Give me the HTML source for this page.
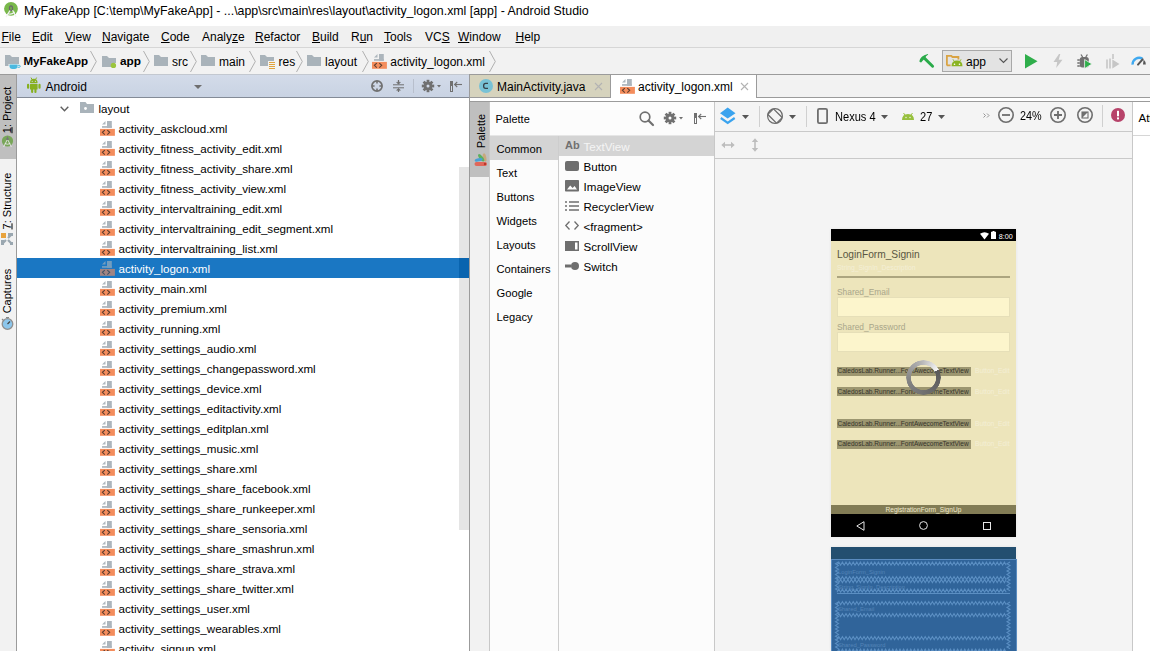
<!DOCTYPE html>
<html><head><meta charset="utf-8">
<style>
*{margin:0;padding:0;box-sizing:border-box}
html,body{width:1150px;height:651px;overflow:hidden;background:#fff;font-family:"Liberation Sans",sans-serif;font-size:12px;color:#000}
.a{position:absolute}
.t{position:absolute;white-space:pre;line-height:1}
svg{position:absolute;overflow:visible}
.u{text-decoration:underline;text-underline-offset:1px;text-decoration-thickness:1px}
</style></head><body>
<div class="a" style="left:0px;top:0px;width:1150px;height:25px;background:#fff;"></div>
<svg style="left:0px;top:0px" width="24" height="24" viewBox="0 0 24 24"><circle cx="11" cy="8.8" r="6.9" fill="#79b84b"/>
  <ellipse cx="11" cy="8.2" rx="1.5" ry="2.4" stroke="#6a6a6a" stroke-width="1.3" fill="#79b84b"/>
  <path d="M10 10.5 L6 17.2 M12.6 10.2 L16.2 17" stroke="#f2f2f2" stroke-width="1.3" fill="none"/>
  <path d="M7.8 13.4 Q11 15.2 14.6 12" stroke="#f2f2f2" stroke-width="1.2" fill="none"/></svg>
<div class="t" style="left:24px;top:4.53px;font-size:12.37px;color:#000;font-weight:400;">MyFakeApp [C:\temp\MyFakeApp] - ...\app\src\main\res\layout\activity_logon.xml [app] - Android Studio</div>
<div class="a" style="left:0px;top:26px;width:1150px;height:21px;background:#f0f0f0;"></div>
<div class="a" style="left:0px;top:47px;width:1150px;height:1px;background:#d6d6d6;"></div>
<div class="t" style="left:1.5px;top:30.84px;font-size:12px;color:#000;font-weight:400;"><span class="u">F</span>ile</div>
<div class="t" style="left:32px;top:30.84px;font-size:12px;color:#000;font-weight:400;"><span class="u">E</span>dit</div>
<div class="t" style="left:65px;top:30.84px;font-size:12px;color:#000;font-weight:400;"><span class="u">V</span>iew</div>
<div class="t" style="left:102px;top:30.84px;font-size:12px;color:#000;font-weight:400;"><span class="u">N</span>avigate</div>
<div class="t" style="left:161px;top:30.84px;font-size:12px;color:#000;font-weight:400;"><span class="u">C</span>ode</div>
<div class="t" style="left:202px;top:30.84px;font-size:12px;color:#000;font-weight:400;">Analy<span class="u">z</span>e</div>
<div class="t" style="left:255px;top:30.84px;font-size:12px;color:#000;font-weight:400;"><span class="u">R</span>efactor</div>
<div class="t" style="left:312px;top:30.84px;font-size:12px;color:#000;font-weight:400;"><span class="u">B</span>uild</div>
<div class="t" style="left:351px;top:30.84px;font-size:12px;color:#000;font-weight:400;">R<span class="u">u</span>n</div>
<div class="t" style="left:384px;top:30.84px;font-size:12px;color:#000;font-weight:400;"><span class="u">T</span>ools</div>
<div class="t" style="left:425px;top:30.84px;font-size:12px;color:#000;font-weight:400;">VC<span class="u">S</span></div>
<div class="t" style="left:458px;top:30.84px;font-size:12px;color:#000;font-weight:400;"><span class="u">W</span>indow</div>
<div class="t" style="left:515.5px;top:30.84px;font-size:12px;color:#000;font-weight:400;"><span class="u">H</span>elp</div>
<div class="a" style="left:0px;top:48px;width:1150px;height:26px;background:#f2f2f2;"></div>
<div class="a" style="left:0px;top:74px;width:1150px;height:1px;background:#9b9b9b;"></div>
<div class="a" style="left:17px;top:74px;width:452px;height:1px;background:#c3c8d0;"></div>
<svg style="left:5px;top:55px" width="16" height="14" viewBox="0 0 16 14"><path d="M0 0 H5 L7 2 H14 V9 H3.5 V11 H0 Z" fill="#a9b3ba"/><path d="M4.5 9.5 H12.5 V11 Q12.5 14 9.5 14 H7.5 Q4.5 14 4.5 11 Z" fill="#4ab9e0"/><path d="M12.5 10.3 H14.2 Q15.3 10.3 15.3 11.3 Q15.3 12.3 14.2 12.3 H12.5" stroke="#4ab9e0" stroke-width="1" fill="none"/></svg>
<div class="t" style="left:23.5px;top:56.27px;font-size:11.5px;color:#000;font-weight:700;">MyFakeApp</div>
<svg style="left:90.3px;top:51px" width="7" height="21" viewBox="0 0 7 21"><path d="M0.5 0 L6.3 10.5 L0.5 21" stroke="#a8a8a8" stroke-width="0.9" fill="none"/></svg>
<svg style="left:102px;top:56px" width="14" height="11" viewBox="0 0 14 11"><path d="M0 0 H5 L7 2 H14 V7 A4 4 0 0 0 9.5 11 H0 Z" fill="#a9b3ba"/><circle cx="11.4" cy="9.4" r="2.7" fill="#9bc53d"/></svg>
<div class="t" style="left:120px;top:56.01px;font-size:11.8px;color:#000;font-weight:700;">app</div>
<svg style="left:143px;top:51px" width="7" height="21" viewBox="0 0 7 21"><path d="M0.5 0 L6.3 10.5 L0.5 21" stroke="#a8a8a8" stroke-width="0.9" fill="none"/></svg>
<svg style="left:154px;top:55px" width="14" height="11" viewBox="0 0 14 11"><path d="M0 0 H5 L7 2 H14 V11 H0 Z" fill="#a9b3ba"/></svg>
<div class="t" style="left:172px;top:55.84px;font-size:12px;color:#000;font-weight:400;">src</div>
<svg style="left:189.8px;top:51px" width="7" height="21" viewBox="0 0 7 21"><path d="M0.5 0 L6.3 10.5 L0.5 21" stroke="#a8a8a8" stroke-width="0.9" fill="none"/></svg>
<svg style="left:201px;top:55px" width="14" height="11" viewBox="0 0 14 11"><path d="M0 0 H5 L7 2 H14 V11 H0 Z" fill="#a9b3ba"/></svg>
<div class="t" style="left:219px;top:55.84px;font-size:12px;color:#000;font-weight:400;">main</div>
<svg style="left:248.5px;top:51px" width="7" height="21" viewBox="0 0 7 21"><path d="M0.5 0 L6.3 10.5 L0.5 21" stroke="#a8a8a8" stroke-width="0.9" fill="none"/></svg>
<svg style="left:260px;top:55px" width="16" height="14" viewBox="0 0 16 14"><path d="M0 0 H5 L7 2 H14 V6 H8 V11 H0 Z" fill="#a9b3ba"/><path d="M9 7.5 H15 M9 9.5 H15 M9 11.5 H15 M9 13.5 H15" stroke="#e0a43d" stroke-width="1"/></svg>
<div class="t" style="left:278.5px;top:55.84px;font-size:12px;color:#000;font-weight:400;">res</div>
<svg style="left:296px;top:51px" width="7" height="21" viewBox="0 0 7 21"><path d="M0.5 0 L6.3 10.5 L0.5 21" stroke="#a8a8a8" stroke-width="0.9" fill="none"/></svg>
<svg style="left:307px;top:55px" width="14" height="11" viewBox="0 0 14 11"><path d="M0 0 H5 L7 2 H14 V11 H0 Z" fill="#a9b3ba"/></svg>
<div class="t" style="left:325px;top:55.84px;font-size:12px;color:#000;font-weight:400;">layout</div>
<svg style="left:361.5px;top:51px" width="7" height="21" viewBox="0 0 7 21"><path d="M0.5 0 L6.3 10.5 L0.5 21" stroke="#a8a8a8" stroke-width="0.9" fill="none"/></svg>
<svg style="left:372px;top:54px" width="15" height="15" viewBox="0 0 15 15"><g opacity="1"><path d="M2 3.6 L5.5 0 V3.6 Z" fill="#aeb7be"/><rect x="7" y="0" width="4.8" height="6.8" fill="#acb5bc"/><rect x="2" y="5.1" width="9.8" height="1.7" fill="#acb5bc"/><rect x="0" y="7.9" width="14.9" height="6.9" fill="#f48d5c"/><path d="M4.8 9.1 L2.4 11.35 L4.8 13.6 M7.3 9.1 L9.7 11.35 L7.3 13.6" stroke="#5c3d2e" stroke-width="1.1" fill="none"/></g></svg>
<div class="t" style="left:390.3px;top:55.84px;font-size:12px;color:#000;font-weight:400;">activity_logon.xml</div>
<svg style="left:488.7px;top:51px" width="7" height="21" viewBox="0 0 7 21"><path d="M0.5 0 L6.3 10.5 L0.5 21" stroke="#a8a8a8" stroke-width="0.9" fill="none"/></svg>
<svg style="left:919px;top:53px" width="16" height="16" viewBox="0 0 16 16"><path d="M0.3 8.6 Q0.8 3.2 8.8 1 L9.2 1.6 Q6.5 3.2 6 5.2 L3 8.5 Q2 10.3 0.3 8.6 Z" fill="#2aab4a"/><path d="M4.8 4.6 L13.6 13.2" stroke="#2aab4a" stroke-width="2.9" stroke-linecap="round"/></svg>
<div class="a" style="left:942px;top:50px;width:70px;height:22px;background:#e3e3e3;border:1px solid #a8a8a8"></div>
<svg style="left:946px;top:55px" width="17" height="12" viewBox="0 0 17 12"><path d="M0.9 10.4 V0.9 H5.3 L6.4 2 H12.4 V4.6 M0.9 10.4 H4.6" stroke="#d9a343" stroke-width="1.8" fill="none"/><path d="M5.5 11.2 Q5.5 5.6 11 5.6 Q16.5 5.6 16.5 11.2 Z" fill="#8ab321"/><path d="M7 4.4 L7.8 5.8 M15 4.4 L14.2 5.8" stroke="#8ab321" stroke-width="1"/><circle cx="8.5" cy="9.2" r="0.8" fill="#fff"/><circle cx="13.5" cy="9.2" r="0.8" fill="#fff"/></svg>
<div class="t" style="left:966px;top:55.84px;font-size:12px;color:#000;font-weight:400;">app</div>
<svg style="left:999px;top:58px" width="9" height="5" viewBox="0 0 9 5"><path d="M0.5 0.5 L4.5 4.5 L8.5 0.5" stroke="#555" stroke-width="1.1" fill="none"/></svg>
<svg style="left:1025px;top:54px" width="13" height="15" viewBox="0 0 13 15"><path d="M0 0 L12.5 7.3 L0 14.6 Z" fill="#2fae4b"/></svg>
<svg style="left:1053px;top:54px" width="10" height="14" viewBox="0 0 10 14"><path d="M6 0 L0.5 8 H4.2 L3.2 14 L9.5 5.8 H5.7 L7.3 0 Z" fill="#c6c6c6"/></svg>
<svg style="left:1077px;top:54px" width="16" height="15" viewBox="0 0 16 15"><path d="M4 0.5 L5.6 3 M10.4 0.5 L8.8 3" stroke="#707070" stroke-width="1.3"/><rect x="2.8" y="3" width="9" height="10.5" rx="2.5" fill="#707070"/><path d="M0.3 6 H2.8 M0.3 9 H2.8 M0.3 12 H2.8" stroke="#707070" stroke-width="1.3"/><path d="M7.6 5.5 L15 10 L7.6 14.6 Z" fill="#2fae4b" stroke="#f2f2f2" stroke-width="0.8"/></svg>
<svg style="left:1106px;top:54px" width="14" height="15" viewBox="0 0 14 15"><path d="M1 5.5 V14.6 M4 4.5 V14.6" stroke="#c6c6c6" stroke-width="1.6"/><path d="M7 0 V5" stroke="#c6c6c6" stroke-width="1.6"/><path d="M6.3 5.6 L13.5 10.1 L6.3 14.6 Z" fill="#c6c6c6"/></svg>
<svg style="left:1131px;top:55px" width="16" height="11" viewBox="0 0 16 11"><path d="M1.6 9.6 A6.6 6.6 0 0 1 11.4 3.6" stroke="#3fa9f0" stroke-width="2.4" fill="none"/><path d="M12.6 4.4 A6.6 6.6 0 0 1 14.8 9.6 L12 9.6 Z" fill="#555"/><path d="M7 9.6 L11.6 4.3" stroke="#555" stroke-width="2" stroke-linecap="round"/></svg>
<div class="a" style="left:0px;top:75px;width:16px;height:576px;background:#f2f2f2;"></div>
<div class="a" style="left:0px;top:75px;width:16px;height:84px;background:#bfbfbf;"></div>
<div class="a" style="left:16px;top:75px;width:1px;height:576px;background:#9b9b9b;"></div>
<div class="t" style="left:7.4px;top:110px;font-size:11px;transform:translate(-50%,-50%) rotate(-90deg);"><span class="u">1</span>: Project</div>
<svg style="left:1px;top:135px" width="13" height="13" viewBox="0 0 13 13"><circle cx="6.5" cy="6" r="5.6" fill="#78a659"/><circle cx="6.5" cy="4" r="1.3" fill="#777"/><path d="M6.5 1.5 V3" stroke="#777" stroke-width="1"/><path d="M6.1 5 L2.6 12 M6.9 5 L10.4 12 M3.8 8.5 Q6.5 10 9.2 8.5" stroke="#e8e8e8" stroke-width="0.9" fill="none"/></svg>
<div class="t" style="left:7.4px;top:200.5px;font-size:11px;transform:translate(-50%,-50%) rotate(-90deg);"><span class="u">7</span>: Structure</div>
<svg style="left:1px;top:233px" width="12" height="12" viewBox="0 0 12 12"><rect x="0" y="0" width="5" height="5" fill="#e8a33d"/><path d="M1 11 L5 7 M11 1 L7 5 M11 11 L7 7" stroke="#9aa7b0" stroke-width="2.2"/><rect x="7" y="0" width="5" height="3" fill="#9aa7b0"/><rect x="0" y="7" width="3" height="5" fill="#9aa7b0"/><rect x="9" y="9" width="3" height="3" fill="#9aa7b0"/></svg>
<div class="t" style="left:7.4px;top:290.7px;font-size:11px;transform:translate(-50%,-50%) rotate(-90deg);">Captures</div>
<svg style="left:1px;top:317px" width="13" height="13" viewBox="0 0 13 13"><circle cx="6.5" cy="7" r="5.3" fill="#8cc6ec" stroke="#8f8f8f" stroke-width="1.3"/><path d="M6.5 7 L9 4.5" stroke="#444" stroke-width="1.2"/><path d="M1 2 L3 4 M5 0.5 H8" stroke="#8a8a8a" stroke-width="1.2"/></svg>
<div class="a" style="left:17px;top:75px;width:452px;height:22px;background:linear-gradient(#d3dbe9,#c9d3e3);"></div>
<div class="a" style="left:17px;top:97px;width:452px;height:1px;background:#848b97;"></div>
<div class="a" style="left:469px;top:75px;width:1px;height:576px;background:#9b9b9b;"></div>
<svg style="left:26px;top:77px" width="15" height="16" viewBox="0 0 15 16"><path d="M5 0.6 L5.9 2.2 M10.6 0.6 L9.7 2.2" stroke="#86b01f" stroke-width="1"/><path d="M4 6 Q4 1.7 7.8 1.7 Q11.6 1.7 11.6 6 Z" fill="#86b01f"/><rect x="4" y="6.8" width="7.6" height="5.8" rx="0.6" fill="#86b01f"/><rect x="1" y="6.8" width="2.2" height="5" rx="1.1" fill="#86b01f"/><rect x="12.4" y="6.8" width="2.2" height="5" rx="1.1" fill="#86b01f"/><rect x="5.1" y="11" width="2.1" height="5" rx="1" fill="#86b01f"/><rect x="8.4" y="11" width="2.1" height="5" rx="1" fill="#86b01f"/><circle cx="6.2" cy="4.3" r="0.6" fill="#d1d9e7"/><circle cx="9.4" cy="4.3" r="0.6" fill="#d1d9e7"/></svg>
<div class="t" style="left:45.5px;top:81.14px;font-size:12px;color:#000;font-weight:400;">Android</div>
<svg style="left:194px;top:85px" width="8" height="4" viewBox="0 0 8 4"><path d="M0 0 H8 L4 4 Z" fill="#6e6e6e"/></svg>
<svg style="left:371px;top:80px" width="12" height="12" viewBox="0 0 12 12"><circle cx="6" cy="6" r="5.1" stroke="#707070" stroke-width="1.7" fill="none"/><path d="M6 1 V3.6 M6 8.4 V11 M1 6 H3.6 M8.4 6 H11" stroke="#707070" stroke-width="1.6"/></svg>
<svg style="left:393px;top:80px" width="11" height="12" viewBox="0 0 11 12"><path d="M0 4.8 H11 M0 7.8 H11" stroke="#707070" stroke-width="1"/><path d="M5.5 0 V3.8 M5.5 8.8 V12" stroke="#707070" stroke-width="1.2"/><path d="M3.6 2.3 L5.5 4.3 L7.4 2.3 Z M3.6 10.3 L5.5 8.3 L7.4 10.3 Z" fill="#707070" stroke="#707070" stroke-width="0.6"/></svg>
<div class="a" style="left:413px;top:79px;width:1px;height:14px;background:#b8bfcc;"></div>
<svg style="left:422px;top:80px" width="12" height="12" viewBox="0 0 12 12"><circle cx="6" cy="6" r="4.3" fill="#707070"/><rect x="4.6" y="-0.2" width="2.8" height="3" transform="rotate(0 6 6)" fill="#707070"/><rect x="4.6" y="-0.2" width="2.8" height="3" transform="rotate(45 6 6)" fill="#707070"/><rect x="4.6" y="-0.2" width="2.8" height="3" transform="rotate(90 6 6)" fill="#707070"/><rect x="4.6" y="-0.2" width="2.8" height="3" transform="rotate(135 6 6)" fill="#707070"/><rect x="4.6" y="-0.2" width="2.8" height="3" transform="rotate(180 6 6)" fill="#707070"/><rect x="4.6" y="-0.2" width="2.8" height="3" transform="rotate(225 6 6)" fill="#707070"/><rect x="4.6" y="-0.2" width="2.8" height="3" transform="rotate(270 6 6)" fill="#707070"/><rect x="4.6" y="-0.2" width="2.8" height="3" transform="rotate(315 6 6)" fill="#707070"/><circle cx="6" cy="6" r="1.5" fill="#d1d9e7"/></svg>
<svg style="left:437px;top:85px" width="4" height="3" viewBox="0 0 4 3"><path d="M0 0 H4 L2 2.5 Z" fill="#707070"/></svg>
<svg style="left:450px;top:81px" width="12" height="11" viewBox="0 0 12 11"><rect x="0" y="0" width="3" height="11" fill="#707070"/><rect x="1" y="5" width="1" height="5" fill="#d1d9e7"/><path d="M4.5 3.5 H12" stroke="#707070" stroke-width="1.1"/><path d="M7.2 1 L4.6 3.5 L7.2 6" stroke="#707070" stroke-width="1.1" fill="none"/></svg>
<svg style="left:60px;top:106px" width="9" height="6" viewBox="0 0 9 6"><path d="M0.7 0.7 L4.5 4.8 L8.3 0.7" stroke="#606060" stroke-width="1.4" fill="none"/></svg>
<svg style="left:80px;top:102px" width="14" height="11" viewBox="0 0 14 11"><path d="M0 0 H5.5 L7 2 H14 V11 H0 Z" fill="#a9b3ba"/><circle cx="5.5" cy="6.5" r="1.4" fill="#fff"/></svg>
<div class="t" style="left:98.5px;top:102.98px;font-size:11.6px;color:#000;font-weight:400;">layout</div>
<svg style="left:100px;top:121px" width="15" height="15" viewBox="0 0 15 15"><g opacity="1"><path d="M2 3.6 L5.5 0 V3.6 Z" fill="#aeb7be"/><rect x="7" y="0" width="4.8" height="6.8" fill="#acb5bc"/><rect x="2" y="5.1" width="9.8" height="1.7" fill="#acb5bc"/><rect x="0" y="7.9" width="14.9" height="6.9" fill="#f48d5c"/><path d="M4.8 9.1 L2.4 11.35 L4.8 13.6 M7.3 9.1 L9.7 11.35 L7.3 13.6" stroke="#5c3d2e" stroke-width="1.1" fill="none"/></g></svg>
<div class="t" style="left:118.5px;top:123.18px;font-size:11.6px;color:#000;font-weight:400;">activity_askcloud.xml</div>
<svg style="left:100px;top:141px" width="15" height="15" viewBox="0 0 15 15"><g opacity="1"><path d="M2 3.6 L5.5 0 V3.6 Z" fill="#aeb7be"/><rect x="7" y="0" width="4.8" height="6.8" fill="#acb5bc"/><rect x="2" y="5.1" width="9.8" height="1.7" fill="#acb5bc"/><rect x="0" y="7.9" width="14.9" height="6.9" fill="#f48d5c"/><path d="M4.8 9.1 L2.4 11.35 L4.8 13.6 M7.3 9.1 L9.7 11.35 L7.3 13.6" stroke="#5c3d2e" stroke-width="1.1" fill="none"/></g></svg>
<div class="t" style="left:118.5px;top:143.18px;font-size:11.6px;color:#000;font-weight:400;">activity_fitness_activity_edit.xml</div>
<svg style="left:100px;top:161px" width="15" height="15" viewBox="0 0 15 15"><g opacity="1"><path d="M2 3.6 L5.5 0 V3.6 Z" fill="#aeb7be"/><rect x="7" y="0" width="4.8" height="6.8" fill="#acb5bc"/><rect x="2" y="5.1" width="9.8" height="1.7" fill="#acb5bc"/><rect x="0" y="7.9" width="14.9" height="6.9" fill="#f48d5c"/><path d="M4.8 9.1 L2.4 11.35 L4.8 13.6 M7.3 9.1 L9.7 11.35 L7.3 13.6" stroke="#5c3d2e" stroke-width="1.1" fill="none"/></g></svg>
<div class="t" style="left:118.5px;top:163.18px;font-size:11.6px;color:#000;font-weight:400;">activity_fitness_activity_share.xml</div>
<svg style="left:100px;top:181px" width="15" height="15" viewBox="0 0 15 15"><g opacity="1"><path d="M2 3.6 L5.5 0 V3.6 Z" fill="#aeb7be"/><rect x="7" y="0" width="4.8" height="6.8" fill="#acb5bc"/><rect x="2" y="5.1" width="9.8" height="1.7" fill="#acb5bc"/><rect x="0" y="7.9" width="14.9" height="6.9" fill="#f48d5c"/><path d="M4.8 9.1 L2.4 11.35 L4.8 13.6 M7.3 9.1 L9.7 11.35 L7.3 13.6" stroke="#5c3d2e" stroke-width="1.1" fill="none"/></g></svg>
<div class="t" style="left:118.5px;top:183.18px;font-size:11.6px;color:#000;font-weight:400;">activity_fitness_activity_view.xml</div>
<svg style="left:100px;top:201px" width="15" height="15" viewBox="0 0 15 15"><g opacity="1"><path d="M2 3.6 L5.5 0 V3.6 Z" fill="#aeb7be"/><rect x="7" y="0" width="4.8" height="6.8" fill="#acb5bc"/><rect x="2" y="5.1" width="9.8" height="1.7" fill="#acb5bc"/><rect x="0" y="7.9" width="14.9" height="6.9" fill="#f48d5c"/><path d="M4.8 9.1 L2.4 11.35 L4.8 13.6 M7.3 9.1 L9.7 11.35 L7.3 13.6" stroke="#5c3d2e" stroke-width="1.1" fill="none"/></g></svg>
<div class="t" style="left:118.5px;top:203.18px;font-size:11.6px;color:#000;font-weight:400;">activity_intervaltraining_edit.xml</div>
<svg style="left:100px;top:221px" width="15" height="15" viewBox="0 0 15 15"><g opacity="1"><path d="M2 3.6 L5.5 0 V3.6 Z" fill="#aeb7be"/><rect x="7" y="0" width="4.8" height="6.8" fill="#acb5bc"/><rect x="2" y="5.1" width="9.8" height="1.7" fill="#acb5bc"/><rect x="0" y="7.9" width="14.9" height="6.9" fill="#f48d5c"/><path d="M4.8 9.1 L2.4 11.35 L4.8 13.6 M7.3 9.1 L9.7 11.35 L7.3 13.6" stroke="#5c3d2e" stroke-width="1.1" fill="none"/></g></svg>
<div class="t" style="left:118.5px;top:223.18px;font-size:11.6px;color:#000;font-weight:400;">activity_intervaltraining_edit_segment.xml</div>
<svg style="left:100px;top:241px" width="15" height="15" viewBox="0 0 15 15"><g opacity="1"><path d="M2 3.6 L5.5 0 V3.6 Z" fill="#aeb7be"/><rect x="7" y="0" width="4.8" height="6.8" fill="#acb5bc"/><rect x="2" y="5.1" width="9.8" height="1.7" fill="#acb5bc"/><rect x="0" y="7.9" width="14.9" height="6.9" fill="#f48d5c"/><path d="M4.8 9.1 L2.4 11.35 L4.8 13.6 M7.3 9.1 L9.7 11.35 L7.3 13.6" stroke="#5c3d2e" stroke-width="1.1" fill="none"/></g></svg>
<div class="t" style="left:118.5px;top:243.18px;font-size:11.6px;color:#000;font-weight:400;">activity_intervaltraining_list.xml</div>
<div class="a" style="left:17px;top:258px;width:452px;height:20px;background:#1a77c3;"></div>
<svg style="left:100px;top:261px" width="15" height="15" viewBox="0 0 15 15"><g opacity="0.62"><path d="M2 3.6 L5.5 0 V3.6 Z" fill="#aeb7be"/><rect x="7" y="0" width="4.8" height="6.8" fill="#acb5bc"/><rect x="2" y="5.1" width="9.8" height="1.7" fill="#acb5bc"/><rect x="0" y="7.9" width="14.9" height="6.9" fill="#f48d5c"/><path d="M4.8 9.1 L2.4 11.35 L4.8 13.6 M7.3 9.1 L9.7 11.35 L7.3 13.6" stroke="#5c3d2e" stroke-width="1.1" fill="none"/></g></svg>
<div class="t" style="left:118.5px;top:263.18px;font-size:11.6px;color:#fff;font-weight:400;">activity_logon.xml</div>
<svg style="left:100px;top:281px" width="15" height="15" viewBox="0 0 15 15"><g opacity="1"><path d="M2 3.6 L5.5 0 V3.6 Z" fill="#aeb7be"/><rect x="7" y="0" width="4.8" height="6.8" fill="#acb5bc"/><rect x="2" y="5.1" width="9.8" height="1.7" fill="#acb5bc"/><rect x="0" y="7.9" width="14.9" height="6.9" fill="#f48d5c"/><path d="M4.8 9.1 L2.4 11.35 L4.8 13.6 M7.3 9.1 L9.7 11.35 L7.3 13.6" stroke="#5c3d2e" stroke-width="1.1" fill="none"/></g></svg>
<div class="t" style="left:118.5px;top:283.18px;font-size:11.6px;color:#000;font-weight:400;">activity_main.xml</div>
<svg style="left:100px;top:301px" width="15" height="15" viewBox="0 0 15 15"><g opacity="1"><path d="M2 3.6 L5.5 0 V3.6 Z" fill="#aeb7be"/><rect x="7" y="0" width="4.8" height="6.8" fill="#acb5bc"/><rect x="2" y="5.1" width="9.8" height="1.7" fill="#acb5bc"/><rect x="0" y="7.9" width="14.9" height="6.9" fill="#f48d5c"/><path d="M4.8 9.1 L2.4 11.35 L4.8 13.6 M7.3 9.1 L9.7 11.35 L7.3 13.6" stroke="#5c3d2e" stroke-width="1.1" fill="none"/></g></svg>
<div class="t" style="left:118.5px;top:303.18px;font-size:11.6px;color:#000;font-weight:400;">activity_premium.xml</div>
<svg style="left:100px;top:321px" width="15" height="15" viewBox="0 0 15 15"><g opacity="1"><path d="M2 3.6 L5.5 0 V3.6 Z" fill="#aeb7be"/><rect x="7" y="0" width="4.8" height="6.8" fill="#acb5bc"/><rect x="2" y="5.1" width="9.8" height="1.7" fill="#acb5bc"/><rect x="0" y="7.9" width="14.9" height="6.9" fill="#f48d5c"/><path d="M4.8 9.1 L2.4 11.35 L4.8 13.6 M7.3 9.1 L9.7 11.35 L7.3 13.6" stroke="#5c3d2e" stroke-width="1.1" fill="none"/></g></svg>
<div class="t" style="left:118.5px;top:323.18px;font-size:11.6px;color:#000;font-weight:400;">activity_running.xml</div>
<svg style="left:100px;top:341px" width="15" height="15" viewBox="0 0 15 15"><g opacity="1"><path d="M2 3.6 L5.5 0 V3.6 Z" fill="#aeb7be"/><rect x="7" y="0" width="4.8" height="6.8" fill="#acb5bc"/><rect x="2" y="5.1" width="9.8" height="1.7" fill="#acb5bc"/><rect x="0" y="7.9" width="14.9" height="6.9" fill="#f48d5c"/><path d="M4.8 9.1 L2.4 11.35 L4.8 13.6 M7.3 9.1 L9.7 11.35 L7.3 13.6" stroke="#5c3d2e" stroke-width="1.1" fill="none"/></g></svg>
<div class="t" style="left:118.5px;top:343.18px;font-size:11.6px;color:#000;font-weight:400;">activity_settings_audio.xml</div>
<svg style="left:100px;top:361px" width="15" height="15" viewBox="0 0 15 15"><g opacity="1"><path d="M2 3.6 L5.5 0 V3.6 Z" fill="#aeb7be"/><rect x="7" y="0" width="4.8" height="6.8" fill="#acb5bc"/><rect x="2" y="5.1" width="9.8" height="1.7" fill="#acb5bc"/><rect x="0" y="7.9" width="14.9" height="6.9" fill="#f48d5c"/><path d="M4.8 9.1 L2.4 11.35 L4.8 13.6 M7.3 9.1 L9.7 11.35 L7.3 13.6" stroke="#5c3d2e" stroke-width="1.1" fill="none"/></g></svg>
<div class="t" style="left:118.5px;top:363.18px;font-size:11.6px;color:#000;font-weight:400;">activity_settings_changepassword.xml</div>
<svg style="left:100px;top:381px" width="15" height="15" viewBox="0 0 15 15"><g opacity="1"><path d="M2 3.6 L5.5 0 V3.6 Z" fill="#aeb7be"/><rect x="7" y="0" width="4.8" height="6.8" fill="#acb5bc"/><rect x="2" y="5.1" width="9.8" height="1.7" fill="#acb5bc"/><rect x="0" y="7.9" width="14.9" height="6.9" fill="#f48d5c"/><path d="M4.8 9.1 L2.4 11.35 L4.8 13.6 M7.3 9.1 L9.7 11.35 L7.3 13.6" stroke="#5c3d2e" stroke-width="1.1" fill="none"/></g></svg>
<div class="t" style="left:118.5px;top:383.18px;font-size:11.6px;color:#000;font-weight:400;">activity_settings_device.xml</div>
<svg style="left:100px;top:401px" width="15" height="15" viewBox="0 0 15 15"><g opacity="1"><path d="M2 3.6 L5.5 0 V3.6 Z" fill="#aeb7be"/><rect x="7" y="0" width="4.8" height="6.8" fill="#acb5bc"/><rect x="2" y="5.1" width="9.8" height="1.7" fill="#acb5bc"/><rect x="0" y="7.9" width="14.9" height="6.9" fill="#f48d5c"/><path d="M4.8 9.1 L2.4 11.35 L4.8 13.6 M7.3 9.1 L9.7 11.35 L7.3 13.6" stroke="#5c3d2e" stroke-width="1.1" fill="none"/></g></svg>
<div class="t" style="left:118.5px;top:403.18px;font-size:11.6px;color:#000;font-weight:400;">activity_settings_editactivity.xml</div>
<svg style="left:100px;top:421px" width="15" height="15" viewBox="0 0 15 15"><g opacity="1"><path d="M2 3.6 L5.5 0 V3.6 Z" fill="#aeb7be"/><rect x="7" y="0" width="4.8" height="6.8" fill="#acb5bc"/><rect x="2" y="5.1" width="9.8" height="1.7" fill="#acb5bc"/><rect x="0" y="7.9" width="14.9" height="6.9" fill="#f48d5c"/><path d="M4.8 9.1 L2.4 11.35 L4.8 13.6 M7.3 9.1 L9.7 11.35 L7.3 13.6" stroke="#5c3d2e" stroke-width="1.1" fill="none"/></g></svg>
<div class="t" style="left:118.5px;top:423.18px;font-size:11.6px;color:#000;font-weight:400;">activity_settings_editplan.xml</div>
<svg style="left:100px;top:441px" width="15" height="15" viewBox="0 0 15 15"><g opacity="1"><path d="M2 3.6 L5.5 0 V3.6 Z" fill="#aeb7be"/><rect x="7" y="0" width="4.8" height="6.8" fill="#acb5bc"/><rect x="2" y="5.1" width="9.8" height="1.7" fill="#acb5bc"/><rect x="0" y="7.9" width="14.9" height="6.9" fill="#f48d5c"/><path d="M4.8 9.1 L2.4 11.35 L4.8 13.6 M7.3 9.1 L9.7 11.35 L7.3 13.6" stroke="#5c3d2e" stroke-width="1.1" fill="none"/></g></svg>
<div class="t" style="left:118.5px;top:443.18px;font-size:11.6px;color:#000;font-weight:400;">activity_settings_music.xml</div>
<svg style="left:100px;top:461px" width="15" height="15" viewBox="0 0 15 15"><g opacity="1"><path d="M2 3.6 L5.5 0 V3.6 Z" fill="#aeb7be"/><rect x="7" y="0" width="4.8" height="6.8" fill="#acb5bc"/><rect x="2" y="5.1" width="9.8" height="1.7" fill="#acb5bc"/><rect x="0" y="7.9" width="14.9" height="6.9" fill="#f48d5c"/><path d="M4.8 9.1 L2.4 11.35 L4.8 13.6 M7.3 9.1 L9.7 11.35 L7.3 13.6" stroke="#5c3d2e" stroke-width="1.1" fill="none"/></g></svg>
<div class="t" style="left:118.5px;top:463.18px;font-size:11.6px;color:#000;font-weight:400;">activity_settings_share.xml</div>
<svg style="left:100px;top:481px" width="15" height="15" viewBox="0 0 15 15"><g opacity="1"><path d="M2 3.6 L5.5 0 V3.6 Z" fill="#aeb7be"/><rect x="7" y="0" width="4.8" height="6.8" fill="#acb5bc"/><rect x="2" y="5.1" width="9.8" height="1.7" fill="#acb5bc"/><rect x="0" y="7.9" width="14.9" height="6.9" fill="#f48d5c"/><path d="M4.8 9.1 L2.4 11.35 L4.8 13.6 M7.3 9.1 L9.7 11.35 L7.3 13.6" stroke="#5c3d2e" stroke-width="1.1" fill="none"/></g></svg>
<div class="t" style="left:118.5px;top:483.18px;font-size:11.6px;color:#000;font-weight:400;">activity_settings_share_facebook.xml</div>
<svg style="left:100px;top:501px" width="15" height="15" viewBox="0 0 15 15"><g opacity="1"><path d="M2 3.6 L5.5 0 V3.6 Z" fill="#aeb7be"/><rect x="7" y="0" width="4.8" height="6.8" fill="#acb5bc"/><rect x="2" y="5.1" width="9.8" height="1.7" fill="#acb5bc"/><rect x="0" y="7.9" width="14.9" height="6.9" fill="#f48d5c"/><path d="M4.8 9.1 L2.4 11.35 L4.8 13.6 M7.3 9.1 L9.7 11.35 L7.3 13.6" stroke="#5c3d2e" stroke-width="1.1" fill="none"/></g></svg>
<div class="t" style="left:118.5px;top:503.18px;font-size:11.6px;color:#000;font-weight:400;">activity_settings_share_runkeeper.xml</div>
<svg style="left:100px;top:521px" width="15" height="15" viewBox="0 0 15 15"><g opacity="1"><path d="M2 3.6 L5.5 0 V3.6 Z" fill="#aeb7be"/><rect x="7" y="0" width="4.8" height="6.8" fill="#acb5bc"/><rect x="2" y="5.1" width="9.8" height="1.7" fill="#acb5bc"/><rect x="0" y="7.9" width="14.9" height="6.9" fill="#f48d5c"/><path d="M4.8 9.1 L2.4 11.35 L4.8 13.6 M7.3 9.1 L9.7 11.35 L7.3 13.6" stroke="#5c3d2e" stroke-width="1.1" fill="none"/></g></svg>
<div class="t" style="left:118.5px;top:523.18px;font-size:11.6px;color:#000;font-weight:400;">activity_settings_share_sensoria.xml</div>
<svg style="left:100px;top:541px" width="15" height="15" viewBox="0 0 15 15"><g opacity="1"><path d="M2 3.6 L5.5 0 V3.6 Z" fill="#aeb7be"/><rect x="7" y="0" width="4.8" height="6.8" fill="#acb5bc"/><rect x="2" y="5.1" width="9.8" height="1.7" fill="#acb5bc"/><rect x="0" y="7.9" width="14.9" height="6.9" fill="#f48d5c"/><path d="M4.8 9.1 L2.4 11.35 L4.8 13.6 M7.3 9.1 L9.7 11.35 L7.3 13.6" stroke="#5c3d2e" stroke-width="1.1" fill="none"/></g></svg>
<div class="t" style="left:118.5px;top:543.18px;font-size:11.6px;color:#000;font-weight:400;">activity_settings_share_smashrun.xml</div>
<svg style="left:100px;top:561px" width="15" height="15" viewBox="0 0 15 15"><g opacity="1"><path d="M2 3.6 L5.5 0 V3.6 Z" fill="#aeb7be"/><rect x="7" y="0" width="4.8" height="6.8" fill="#acb5bc"/><rect x="2" y="5.1" width="9.8" height="1.7" fill="#acb5bc"/><rect x="0" y="7.9" width="14.9" height="6.9" fill="#f48d5c"/><path d="M4.8 9.1 L2.4 11.35 L4.8 13.6 M7.3 9.1 L9.7 11.35 L7.3 13.6" stroke="#5c3d2e" stroke-width="1.1" fill="none"/></g></svg>
<div class="t" style="left:118.5px;top:563.18px;font-size:11.6px;color:#000;font-weight:400;">activity_settings_share_strava.xml</div>
<svg style="left:100px;top:581px" width="15" height="15" viewBox="0 0 15 15"><g opacity="1"><path d="M2 3.6 L5.5 0 V3.6 Z" fill="#aeb7be"/><rect x="7" y="0" width="4.8" height="6.8" fill="#acb5bc"/><rect x="2" y="5.1" width="9.8" height="1.7" fill="#acb5bc"/><rect x="0" y="7.9" width="14.9" height="6.9" fill="#f48d5c"/><path d="M4.8 9.1 L2.4 11.35 L4.8 13.6 M7.3 9.1 L9.7 11.35 L7.3 13.6" stroke="#5c3d2e" stroke-width="1.1" fill="none"/></g></svg>
<div class="t" style="left:118.5px;top:583.18px;font-size:11.6px;color:#000;font-weight:400;">activity_settings_share_twitter.xml</div>
<svg style="left:100px;top:601px" width="15" height="15" viewBox="0 0 15 15"><g opacity="1"><path d="M2 3.6 L5.5 0 V3.6 Z" fill="#aeb7be"/><rect x="7" y="0" width="4.8" height="6.8" fill="#acb5bc"/><rect x="2" y="5.1" width="9.8" height="1.7" fill="#acb5bc"/><rect x="0" y="7.9" width="14.9" height="6.9" fill="#f48d5c"/><path d="M4.8 9.1 L2.4 11.35 L4.8 13.6 M7.3 9.1 L9.7 11.35 L7.3 13.6" stroke="#5c3d2e" stroke-width="1.1" fill="none"/></g></svg>
<div class="t" style="left:118.5px;top:603.18px;font-size:11.6px;color:#000;font-weight:400;">activity_settings_user.xml</div>
<svg style="left:100px;top:621px" width="15" height="15" viewBox="0 0 15 15"><g opacity="1"><path d="M2 3.6 L5.5 0 V3.6 Z" fill="#aeb7be"/><rect x="7" y="0" width="4.8" height="6.8" fill="#acb5bc"/><rect x="2" y="5.1" width="9.8" height="1.7" fill="#acb5bc"/><rect x="0" y="7.9" width="14.9" height="6.9" fill="#f48d5c"/><path d="M4.8 9.1 L2.4 11.35 L4.8 13.6 M7.3 9.1 L9.7 11.35 L7.3 13.6" stroke="#5c3d2e" stroke-width="1.1" fill="none"/></g></svg>
<div class="t" style="left:118.5px;top:623.18px;font-size:11.6px;color:#000;font-weight:400;">activity_settings_wearables.xml</div>
<svg style="left:100px;top:641px" width="15" height="15" viewBox="0 0 15 15"><g opacity="1"><path d="M2 3.6 L5.5 0 V3.6 Z" fill="#aeb7be"/><rect x="7" y="0" width="4.8" height="6.8" fill="#acb5bc"/><rect x="2" y="5.1" width="9.8" height="1.7" fill="#acb5bc"/><rect x="0" y="7.9" width="14.9" height="6.9" fill="#f48d5c"/><path d="M4.8 9.1 L2.4 11.35 L4.8 13.6 M7.3 9.1 L9.7 11.35 L7.3 13.6" stroke="#5c3d2e" stroke-width="1.1" fill="none"/></g></svg>
<div class="t" style="left:118.5px;top:643.18px;font-size:11.6px;color:#000;font-weight:400;">activity_signup.xml</div>
<div class="a" style="left:459px;top:167px;width:10px;height:363px;background:rgba(0,0,0,0.1);"></div>
<div class="a" style="left:459px;top:258px;width:10px;height:20px;background:#0964af;"></div>
<div class="a" style="left:470px;top:75px;width:680px;height:576px;background:#f2f2f2;"></div>
<div class="a" style="left:470px;top:97px;width:680px;height:1px;background:#9b9b9b;"></div>
<div class="a" style="left:470px;top:98px;width:680px;height:3px;background:#fff;"></div>
<div class="a" style="left:470px;top:101px;width:680px;height:1px;background:#9b9b9b;"></div>
<div class="a" style="left:470px;top:75px;width:140px;height:22px;background:#d6d3bd;"></div>
<div class="a" style="left:610px;top:75px;width:1px;height:22px;background:#9b9b9b;"></div>
<div class="a" style="left:611px;top:75px;width:145px;height:26px;background:#fff;"></div>
<div class="a" style="left:756px;top:75px;width:1px;height:22px;background:#9b9b9b;"></div>
<svg style="left:479px;top:79px" width="14" height="14" viewBox="0 0 14 14"><circle cx="7" cy="7" r="7" fill="#78c2d6"/><path d="M9 4.4 H6.6 Q4.6 4.4 4.6 7 Q4.6 9.4 6.6 9.4 H9" stroke="#37424a" stroke-width="1.3" fill="none"/></svg>
<div class="t" style="left:497px;top:81.34px;font-size:12px;color:#000;font-weight:400;">MainActivity.java</div>
<svg style="left:595px;top:83px" width="7" height="7" viewBox="0 0 7 7"><path d="M0 0 L7 7 M7 0 L0 7" stroke="#b3b3b3" stroke-width="1.1"/></svg>
<svg style="left:620px;top:79px" width="15" height="15" viewBox="0 0 15 15"><g opacity="1"><path d="M2 3.6 L5.5 0 V3.6 Z" fill="#aeb7be"/><rect x="7" y="0" width="4.8" height="6.8" fill="#acb5bc"/><rect x="2" y="5.1" width="9.8" height="1.7" fill="#acb5bc"/><rect x="0" y="7.9" width="14.9" height="6.9" fill="#f48d5c"/><path d="M4.8 9.1 L2.4 11.35 L4.8 13.6 M7.3 9.1 L9.7 11.35 L7.3 13.6" stroke="#5c3d2e" stroke-width="1.1" fill="none"/></g></svg>
<div class="t" style="left:638px;top:81.34px;font-size:12px;color:#000;font-weight:400;">activity_logon.xml</div>
<svg style="left:741px;top:83px" width="7" height="7" viewBox="0 0 7 7"><path d="M0 0 L7 7 M7 0 L0 7" stroke="#b3b3b3" stroke-width="1.1"/></svg>
<div class="a" style="left:470px;top:102px;width:19px;height:549px;background:#f2f2f2;"></div>
<div class="a" style="left:470px;top:102px;width:19px;height:75px;background:#bfbfbf;"></div>
<div class="a" style="left:489px;top:102px;width:1px;height:549px;background:#c8c8c8;"></div>
<div class="t" style="left:481px;top:131px;font-size:11px;transform:translate(-50%,-50%) rotate(-90deg);">Palette</div>
<svg style="left:474px;top:153px" width="13" height="13" viewBox="0 0 13 13"><ellipse cx="10.6" cy="4.5" rx="4.2" ry="1.7" transform="rotate(78 10.6 4.5)" fill="#c8a87c"/><ellipse cx="7.2" cy="4.8" rx="4.4" ry="1.8" transform="rotate(52 7.2 4.8)" fill="#5bb060"/><ellipse cx="4.6" cy="6.8" rx="4" ry="1.6" transform="rotate(-12 4.6 6.8)" fill="#4a9fd4"/><rect x="0.5" y="9" width="12.5" height="4" rx="2" fill="#e0675a"/><circle cx="11" cy="11" r="1.2" fill="#b9382a"/></svg>
<div class="a" style="left:490px;top:102px;width:224px;height:549px;background:#fcfcfc;"></div>
<div class="a" style="left:490px;top:135px;width:224px;height:1px;background:#e6e6e6;"></div>
<div class="t" style="left:495.5px;top:113.99px;font-size:11px;color:#000;font-weight:400;">Palette</div>
<svg style="left:639px;top:111px" width="15" height="15" viewBox="0 0 15 15"><circle cx="6" cy="6" r="4.8" stroke="#707070" stroke-width="1.7" fill="none"/><path d="M9.5 9.5 L14 14" stroke="#707070" stroke-width="2.2" stroke-linecap="round"/></svg>
<svg style="left:664px;top:112px" width="12" height="12" viewBox="0 0 12 12"><circle cx="6" cy="6" r="4.3" fill="#707070"/><rect x="4.6" y="-0.2" width="2.8" height="3" transform="rotate(0 6 6)" fill="#707070"/><rect x="4.6" y="-0.2" width="2.8" height="3" transform="rotate(45 6 6)" fill="#707070"/><rect x="4.6" y="-0.2" width="2.8" height="3" transform="rotate(90 6 6)" fill="#707070"/><rect x="4.6" y="-0.2" width="2.8" height="3" transform="rotate(135 6 6)" fill="#707070"/><rect x="4.6" y="-0.2" width="2.8" height="3" transform="rotate(180 6 6)" fill="#707070"/><rect x="4.6" y="-0.2" width="2.8" height="3" transform="rotate(225 6 6)" fill="#707070"/><rect x="4.6" y="-0.2" width="2.8" height="3" transform="rotate(270 6 6)" fill="#707070"/><rect x="4.6" y="-0.2" width="2.8" height="3" transform="rotate(315 6 6)" fill="#707070"/><circle cx="6" cy="6" r="1.5" fill="#fcfcfc"/></svg>
<svg style="left:679px;top:117px" width="4" height="3" viewBox="0 0 4 3"><path d="M0 0 H4 L2 2.5 Z" fill="#707070"/></svg>
<svg style="left:694px;top:113px" width="12" height="11" viewBox="0 0 12 11"><rect x="0" y="0" width="3" height="11" fill="#707070"/><rect x="1" y="5" width="1" height="5" fill="#fcfcfc"/><path d="M4.5 3.5 H12" stroke="#707070" stroke-width="1.1"/><path d="M7.2 1 L4.6 3.5 L7.2 6" stroke="#707070" stroke-width="1.1" fill="none"/></svg>
<div class="a" style="left:490px;top:136px;width:68px;height:24px;background:#d4d4d4;"></div>
<div class="a" style="left:558px;top:136px;width:1px;height:515px;background:#cdcdcd;"></div>
<div class="t" style="left:496.5px;top:143.92px;font-size:11.2px;color:#000;font-weight:400;">Common</div>
<div class="t" style="left:496.5px;top:167.92px;font-size:11.2px;color:#000;font-weight:400;">Text</div>
<div class="t" style="left:496.5px;top:191.92px;font-size:11.2px;color:#000;font-weight:400;">Buttons</div>
<div class="t" style="left:496.5px;top:215.92px;font-size:11.2px;color:#000;font-weight:400;">Widgets</div>
<div class="t" style="left:496.5px;top:239.92px;font-size:11.2px;color:#000;font-weight:400;">Layouts</div>
<div class="t" style="left:496.5px;top:263.92px;font-size:11.2px;color:#000;font-weight:400;">Containers</div>
<div class="t" style="left:496.5px;top:287.92px;font-size:11.2px;color:#000;font-weight:400;">Google</div>
<div class="t" style="left:496.5px;top:311.92px;font-size:11.2px;color:#000;font-weight:400;">Legacy</div>
<div class="a" style="left:559px;top:136px;width:155px;height:20px;background:#d4d4d4;"></div>
<div class="t" style="left:565px;top:140.29px;font-size:11px;color:#707070;font-weight:700;">Ab</div>
<div class="t" style="left:583.5px;top:140.98px;font-size:11.6px;color:#f4f4f4;font-weight:400;">TextView</div>
<div class="t" style="left:583.5px;top:161.18px;font-size:11.6px;color:#000;font-weight:400;">Button</div>
<div class="t" style="left:583.5px;top:181.18px;font-size:11.6px;color:#000;font-weight:400;">ImageView</div>
<div class="t" style="left:583.5px;top:201.18px;font-size:11.6px;color:#000;font-weight:400;">RecyclerView</div>
<div class="t" style="left:583.5px;top:221.18px;font-size:11.6px;color:#000;font-weight:400;">&lt;fragment&gt;</div>
<div class="t" style="left:583.5px;top:241.18px;font-size:11.6px;color:#000;font-weight:400;">ScrollView</div>
<div class="t" style="left:583.5px;top:261.18px;font-size:11.6px;color:#000;font-weight:400;">Switch</div>
<svg style="left:565px;top:161px" width="14" height="10" viewBox="0 0 14 10"><rect x="0" y="0" width="14" height="10" rx="2" fill="#6e6e6e"/></svg>
<svg style="left:565px;top:180px" width="14" height="12" viewBox="0 0 14 12"><rect x="0" y="0" width="14" height="11.5" rx="0.8" fill="#6e6e6e"/><path d="M2 9.6 L5.2 5.6 L7.6 8 L9.6 6 L12 9.6 Z" fill="#fcfcfc"/></svg>
<svg style="left:565px;top:201px" width="14" height="10" viewBox="0 0 14 10"><path d="M0 1 H2 M0 5 H2 M0 9 H2 M4 1 H14 M4 5 H14 M4 9 H14" stroke="#6e6e6e" stroke-width="1.6"/></svg>
<svg style="left:565px;top:221px" width="14" height="9" viewBox="0 0 14 9"><path d="M4.5 0.5 L0.8 4.5 L4.5 8.5 M9.5 0.5 L13.2 4.5 L9.5 8.5" stroke="#6e6e6e" stroke-width="1.3" fill="none"/></svg>
<svg style="left:565px;top:241px" width="14" height="10" viewBox="0 0 14 10"><rect x="0" y="0" width="14" height="10" fill="#6e6e6e"/><rect x="10" y="1.5" width="2.5" height="7" fill="#fff"/></svg>
<svg style="left:565px;top:262px" width="14" height="8" viewBox="0 0 14 8"><rect x="0" y="2.5" width="6" height="3" fill="#6e6e6e"/><circle cx="10" cy="4" r="4" fill="#6e6e6e"/></svg>
<div class="a" style="left:714px;top:102px;width:1px;height:549px;background:#c8c8c8;"></div>
<div class="a" style="left:715px;top:102px;width:418px;height:549px;background:#f4f4f4;"></div>
<div class="a" style="left:715px;top:131px;width:418px;height:1px;background:#c9c9c9;"></div>
<div class="a" style="left:715px;top:158px;width:418px;height:1px;background:#c9c9c9;"></div>
<svg style="left:720px;top:107px" width="16" height="17" viewBox="0 0 16 17"><path d="M7.7 0.6 L15.5 6.2 L7.7 11.6 L0 6.2 Z" fill="#3aa3ee"/><path d="M0.8 11 L7.7 15.8 L14.7 11" stroke="#3aa3ee" stroke-width="2.2" fill="none"/></svg>
<svg style="left:742px;top:114.5px" width="7" height="4" viewBox="0 0 7 4"><path d="M0 0 H7 L3.5 4 Z" fill="#555"/></svg>
<div class="a" style="left:759px;top:106px;width:1px;height:21px;background:#d0d0d0;"></div>
<svg style="left:767px;top:108px" width="16" height="16" viewBox="0 0 16 16"><circle cx="8" cy="8" r="7.4" stroke="#6a6a6a" stroke-width="1.2" fill="none"/><rect x="4" y="1.8" width="8" height="12.4" rx="0.8" transform="rotate(-45 8 8)" stroke="#6a6a6a" stroke-width="1.3" fill="#f4f4f4"/></svg>
<svg style="left:789px;top:114.5px" width="7" height="4" viewBox="0 0 7 4"><path d="M0 0 H7 L3.5 4 Z" fill="#555"/></svg>
<div class="a" style="left:806px;top:106px;width:1px;height:21px;background:#d0d0d0;"></div>
<svg style="left:817px;top:108px" width="11" height="16" viewBox="0 0 11 16"><rect x="0.9" y="0.9" width="9.2" height="14.2" rx="1.4" stroke="#6e6e6e" stroke-width="1.8" fill="none"/></svg>
<div class="t" style="left:834.5px;top:110.59px;font-size:12.3px;color:#000;font-weight:400;transform:scaleX(0.9);transform-origin:0 0">Nexus 4</div>
<svg style="left:881px;top:114.5px" width="7" height="4" viewBox="0 0 7 4"><path d="M0 0 H7 L3.5 4 Z" fill="#555"/></svg>
<svg style="left:902px;top:113px" width="12" height="7" viewBox="0 0 12 7"><path d="M0 7 Q0 1 6 1 Q12 1 12 7 Z" fill="#97c03d"/><path d="M1.5 0 L3 2 M10.5 0 L9 2" stroke="#97c03d"/><circle cx="4" cy="4.5" r="0.7" fill="#f2f2f2"/><circle cx="8" cy="4.5" r="0.7" fill="#f2f2f2"/></svg>
<div class="t" style="left:920px;top:110.59px;font-size:12.3px;color:#000;font-weight:400;transform:scaleX(0.9);transform-origin:0 0">27</div>
<svg style="left:938px;top:114.5px" width="7" height="4" viewBox="0 0 7 4"><path d="M0 0 H7 L3.5 4 Z" fill="#555"/></svg>
<svg style="left:983px;top:113px" width="7" height="5" viewBox="0 0 7 5"><path d="M0.5 0.5 L2.5 2.5 L0.5 4.5 M4 0.5 L6 2.5 L4 4.5" stroke="#8a8a8a" stroke-width="0.9" fill="none"/></svg>
<svg style="left:998px;top:107px" width="16" height="16" viewBox="0 0 16 16"><circle cx="8" cy="8" r="7.2" stroke="#6e6e6e" stroke-width="1.6" fill="none"/><path d="M4 8 H12" stroke="#6e6e6e" stroke-width="1.8"/></svg>
<div class="t" style="left:1020px;top:110.34px;font-size:12px;color:#000;font-weight:400;transform:scaleX(0.9);transform-origin:0 0">24%</div>
<svg style="left:1050px;top:107px" width="16" height="16" viewBox="0 0 16 16"><circle cx="8" cy="8" r="7.2" stroke="#6e6e6e" stroke-width="1.6" fill="none"/><path d="M4 8 H12 M8 4 V12" stroke="#6e6e6e" stroke-width="1.8"/></svg>
<svg style="left:1077px;top:107px" width="16" height="16" viewBox="0 0 16 16"><circle cx="8" cy="8" r="7.2" stroke="#6e6e6e" stroke-width="1.6" fill="none"/><rect x="5" y="5" width="6" height="6" stroke="#6e6e6e" stroke-width="1.1" fill="none"/><path d="M5 5 H11 L5 11 Z" fill="#6e6e6e"/></svg>
<div class="a" style="left:1102px;top:105px;width:1px;height:22px;background:#d0d0d0;"></div>
<svg style="left:1111px;top:108px" width="14" height="14" viewBox="0 0 14 14"><circle cx="7" cy="7" r="7" fill="#b7436a"/><rect x="6" y="2.8" width="2" height="5.5" fill="#fff"/><rect x="6" y="9.4" width="2" height="2" fill="#fff"/></svg>
<svg style="left:721px;top:141px" width="14" height="8" viewBox="0 0 14 8"><path d="M3 4 H11" stroke="#bdbdbd" stroke-width="1.6"/><path d="M0.3 4 L4 0.8 V7.2 Z M13.7 4 L10 0.8 V7.2 Z" fill="#bdbdbd"/></svg>
<svg style="left:751px;top:138px" width="8" height="14" viewBox="0 0 8 14"><path d="M4 3 V11" stroke="#bdbdbd" stroke-width="1.6"/><path d="M4 0.3 L0.8 4 H7.2 Z M4 13.7 L0.8 10 H7.2 Z" fill="#bdbdbd"/></svg>
<div class="a" style="left:1132px;top:102px;width:1px;height:549px;background:#c8c8c8;"></div>
<div class="a" style="left:1133px;top:102px;width:17px;height:549px;background:#fff;"></div>
<div class="a" style="left:1133px;top:135px;width:17px;height:1px;background:#d6d6d6;"></div>
<div class="t" style="left:1138.5px;top:113.27px;font-size:11.5px;color:#000;font-weight:400;">Att</div>
<div class="a" style="left:831px;top:229px;width:185px;height:308px;background:#ede5bb;box-shadow:0 0 3px rgba(0,0,0,0.07)"></div>
<div class="a" style="left:831px;top:229px;width:185px;height:12px;background:#000;"></div>
<svg style="left:980px;top:231.5px" width="9" height="7.5" viewBox="0 0 9 7.5"><path d="M0 1.8 Q4.5 -1.2 9 1.8 L4.5 7.5 Z" fill="#fff"/></svg>
<svg style="left:991px;top:231px" width="5" height="8" viewBox="0 0 5 8"><rect x="0" y="0.8" width="5" height="7.2" fill="#fff"/><rect x="1.5" y="0" width="2" height="1" fill="#fff"/></svg>
<div class="t" style="left:998.8px;top:233.11px;font-size:7.2px;color:#fff;font-weight:400;">8:00</div>
<div class="t" style="left:837px;top:250.17px;font-size:10.2px;color:#5a5742;font-weight:400;">LoginForm_Signin</div>
<div class="t" style="left:837px;top:264.74px;font-size:6.8px;color:#f4efd6;font-weight:400;">String_SignIn_Description</div>
<div class="a" style="left:837px;top:275.5px;width:173px;height:2px;background:#aca57f;"></div>
<div class="t" style="left:837px;top:288.19px;font-size:8.4px;color:#a9a58a;font-weight:400;">Shared_Email</div>
<div class="a" style="left:837px;top:297px;width:173px;height:20px;background:#fcf5cc;border:1px solid #e6dfb8"></div>
<div class="t" style="left:837px;top:323.09px;font-size:8.4px;color:#a9a58a;font-weight:400;">Shared_Password</div>
<div class="a" style="left:837px;top:332px;width:173px;height:20px;background:#fcf5cc;border:1px solid #e6dfb8"></div>
<div class="a" style="left:837px;top:366.5px;width:134px;height:9px;background:#9c9670;"></div>
<div class="t" style="left:837.5px;top:368.46px;font-size:6.55px;color:#35332a;font-weight:400;">CaledosLab.Runner...FontAwecomeTextView</div>
<div class="t" style="left:975px;top:368.33px;font-size:6.7px;color:#f4efd6;font-weight:400;">Button_Edit</div>
<div class="a" style="left:837px;top:387px;width:134px;height:9px;background:#9c9670;"></div>
<div class="t" style="left:837.5px;top:388.96px;font-size:6.55px;color:#35332a;font-weight:400;">CaledosLab.Runner...FontAwecomeTextView</div>
<div class="t" style="left:975px;top:388.83px;font-size:6.7px;color:#f4efd6;font-weight:400;">Button_Edit</div>
<div class="a" style="left:837px;top:419px;width:134px;height:9px;background:#9c9670;"></div>
<div class="t" style="left:837.5px;top:420.96px;font-size:6.55px;color:#35332a;font-weight:400;">CaledosLab.Runner...FontAwecomeTextView</div>
<div class="t" style="left:975px;top:420.83px;font-size:6.7px;color:#f4efd6;font-weight:400;">Button_Edit</div>
<div class="a" style="left:837px;top:439.5px;width:134px;height:9px;background:#9c9670;"></div>
<div class="t" style="left:837.5px;top:441.46px;font-size:6.55px;color:#35332a;font-weight:400;">CaledosLab.Runner...FontAwecomeTextView</div>
<div class="t" style="left:975px;top:441.33px;font-size:6.7px;color:#f4efd6;font-weight:400;">Button_Edit</div>
<div class="a" style="left:906px;top:360px;width:35px;height:35px;border-radius:50%;background:conic-gradient(from 62deg,#5a5a5a,#6c6c6c 100deg,#858585 200deg,#b5b5b5 290deg,#f4f4f4 358deg);-webkit-mask:radial-gradient(circle,transparent 12.3px,#000 12.9px,#000 17px,transparent 17.6px);mask:radial-gradient(circle,transparent 12.3px,#000 12.9px,#000 17px,transparent 17.6px)"></div>
<div class="a" style="left:831px;top:505px;width:185px;height:9px;background:#827c55;"></div>
<div class="t" style="left:885.5px;top:506.91px;font-size:6.6px;color:#efe9cc;font-weight:400;">RegistrationForm_SignUp</div>
<div class="a" style="left:831px;top:514px;width:185px;height:23px;background:#000;"></div>
<svg style="left:856px;top:521px" width="9" height="10" viewBox="0 0 9 10"><path d="M8 0.7 V9.3 L0.8 5 Z" stroke="#e6e6e6" stroke-width="1" fill="none"/></svg>
<svg style="left:919px;top:521px" width="9" height="9" viewBox="0 0 9 9"><circle cx="4.5" cy="4.5" r="3.9" stroke="#e6e6e6" stroke-width="1" fill="none"/></svg>
<svg style="left:983px;top:522px" width="8" height="8" viewBox="0 0 8 8"><rect x="0.5" y="0.5" width="7" height="7" stroke="#e6e6e6" stroke-width="1" fill="none"/></svg>
<div class="a" style="left:831px;top:547px;width:185px;height:104px;background:#30649a;box-shadow:0 0 3px rgba(0,0,0,0.07)"></div>
<div class="a" style="left:831px;top:547px;width:185px;height:12px;background:#234f70;"></div>
<div class="a" style="left:831px;top:559px;width:185px;height:1px;background:#5a8cc0;"></div>
<div class="a" style="left:831px;top:559px;width:1px;height:92px;background:#5a8cc0;"></div>
<div class="a" style="left:1016px;top:559px;width:1px;height:92px;background:#5a8cc0;"></div>
<svg style="left:0;top:0" width="1150" height="651"><polyline points="837.00,565.20 838.80,562.00 840.60,565.20 842.40,562.00 844.20,565.20 846.00,562.00 847.80,565.20 849.60,562.00 851.40,565.20 853.20,562.00 855.00,565.20 856.80,562.00 858.60,565.20 860.40,562.00 862.20,565.20 864.00,562.00 865.80,565.20 867.60,562.00 869.40,565.20 871.20,562.00 873.00,565.20 874.80,562.00 876.60,565.20 878.40,562.00 880.20,565.20 882.00,562.00 883.80,565.20 885.60,562.00 887.40,565.20 889.20,562.00 891.00,565.20 892.80,562.00 894.60,565.20 896.40,562.00 898.20,565.20 900.00,562.00 901.80,565.20 903.60,562.00 905.40,565.20 907.20,562.00 909.00,565.20 910.80,562.00 912.60,565.20 914.40,562.00 916.20,565.20 918.00,562.00 919.80,565.20 921.60,562.00 923.40,565.20 925.20,562.00 927.00,565.20 928.80,562.00 930.60,565.20 932.40,562.00 934.20,565.20 936.00,562.00 937.80,565.20 939.60,562.00 941.40,565.20 943.20,562.00 945.00,565.20 946.80,562.00 948.60,565.20 950.40,562.00 952.20,565.20 954.00,562.00 955.80,565.20 957.60,562.00 959.40,565.20 961.20,562.00 963.00,565.20 964.80,562.00 966.60,565.20 968.40,562.00 970.20,565.20 972.00,562.00 973.80,565.20 975.60,562.00 977.40,565.20 979.20,562.00 981.00,565.20 982.80,562.00 984.60,565.20 986.40,562.00 988.20,565.20 990.00,562.00 991.80,565.20 993.60,562.00 995.40,565.20 997.20,562.00 999.00,565.20 1000.80,562.00 1002.60,565.20 1004.40,562.00 1006.20,565.20" stroke="#5b8fc3" stroke-width="1.1" fill="none"/></svg>
<div class="t" style="left:838px;top:569.59px;font-size:5.8px;color:#5485b8;font-weight:400;">LoginForm_Signin</div>
<svg style="left:0;top:0" width="1150" height="651"><polyline points="837.00,579.70 838.80,576.50 840.60,579.70 842.40,576.50 844.20,579.70 846.00,576.50 847.80,579.70 849.60,576.50 851.40,579.70 853.20,576.50 855.00,579.70 856.80,576.50 858.60,579.70 860.40,576.50 862.20,579.70 864.00,576.50 865.80,579.70 867.60,576.50 869.40,579.70 871.20,576.50 873.00,579.70 874.80,576.50 876.60,579.70 878.40,576.50 880.20,579.70 882.00,576.50 883.80,579.70 885.60,576.50 887.40,579.70 889.20,576.50 891.00,579.70 892.80,576.50 894.60,579.70 896.40,576.50 898.20,579.70 900.00,576.50 901.80,579.70 903.60,576.50 905.40,579.70 907.20,576.50 909.00,579.70 910.80,576.50 912.60,579.70 914.40,576.50 916.20,579.70 918.00,576.50 919.80,579.70 921.60,576.50 923.40,579.70 925.20,576.50 927.00,579.70 928.80,576.50 930.60,579.70 932.40,576.50 934.20,579.70 936.00,576.50 937.80,579.70 939.60,576.50 941.40,579.70 943.20,576.50 945.00,579.70 946.80,576.50 948.60,579.70 950.40,576.50 952.20,579.70 954.00,576.50 955.80,579.70 957.60,576.50 959.40,579.70 961.20,576.50 963.00,579.70 964.80,576.50 966.60,579.70 968.40,576.50 970.20,579.70 972.00,576.50 973.80,579.70 975.60,576.50 977.40,579.70 979.20,576.50 981.00,579.70 982.80,576.50 984.60,579.70 986.40,576.50 988.20,579.70 990.00,576.50 991.80,579.70 993.60,576.50 995.40,579.70 997.20,576.50 999.00,579.70 1000.80,576.50 1002.60,579.70 1004.40,576.50 1006.20,579.70" stroke="#5b8fc3" stroke-width="1.1" fill="none"/></svg>
<svg style="left:0;top:0" width="1150" height="651"><polyline points="837.00,579.50 838.80,582.70 840.60,579.50 842.40,582.70 844.20,579.50 846.00,582.70 847.80,579.50 849.60,582.70 851.40,579.50 853.20,582.70 855.00,579.50 856.80,582.70 858.60,579.50 860.40,582.70 862.20,579.50 864.00,582.70 865.80,579.50 867.60,582.70 869.40,579.50 871.20,582.70 873.00,579.50 874.80,582.70 876.60,579.50 878.40,582.70 880.20,579.50 882.00,582.70 883.80,579.50 885.60,582.70 887.40,579.50 889.20,582.70 891.00,579.50 892.80,582.70 894.60,579.50 896.40,582.70 898.20,579.50 900.00,582.70 901.80,579.50 903.60,582.70 905.40,579.50 907.20,582.70 909.00,579.50 910.80,582.70 912.60,579.50 914.40,582.70 916.20,579.50 918.00,582.70 919.80,579.50 921.60,582.70 923.40,579.50 925.20,582.70 927.00,579.50 928.80,582.70 930.60,579.50 932.40,582.70 934.20,579.50 936.00,582.70 937.80,579.50 939.60,582.70 941.40,579.50 943.20,582.70 945.00,579.50 946.80,582.70 948.60,579.50 950.40,582.70 952.20,579.50 954.00,582.70 955.80,579.50 957.60,582.70 959.40,579.50 961.20,582.70 963.00,579.50 964.80,582.70 966.60,579.50 968.40,582.70 970.20,579.50 972.00,582.70 973.80,579.50 975.60,582.70 977.40,579.50 979.20,582.70 981.00,579.50 982.80,582.70 984.60,579.50 986.40,582.70 988.20,579.50 990.00,582.70 991.80,579.50 993.60,582.70 995.40,579.50 997.20,582.70 999.00,579.50 1000.80,582.70 1002.60,579.50 1004.40,582.70 1006.20,579.50" stroke="#5b8fc3" stroke-width="1.1" fill="none"/></svg>
<div class="t" style="left:838px;top:584.59px;font-size:5.8px;color:#5485b8;font-weight:400;">String_SignIn_Description</div>
<svg style="left:0;top:0" width="1150" height="651"><polyline points="837.00,592.20 838.80,589.00 840.60,592.20 842.40,589.00 844.20,592.20 846.00,589.00 847.80,592.20 849.60,589.00 851.40,592.20 853.20,589.00 855.00,592.20 856.80,589.00 858.60,592.20 860.40,589.00 862.20,592.20 864.00,589.00 865.80,592.20 867.60,589.00 869.40,592.20 871.20,589.00 873.00,592.20 874.80,589.00 876.60,592.20 878.40,589.00 880.20,592.20 882.00,589.00 883.80,592.20 885.60,589.00 887.40,592.20 889.20,589.00 891.00,592.20 892.80,589.00 894.60,592.20 896.40,589.00 898.20,592.20 900.00,589.00 901.80,592.20 903.60,589.00 905.40,592.20 907.20,589.00 909.00,592.20 910.80,589.00 912.60,592.20 914.40,589.00 916.20,592.20 918.00,589.00 919.80,592.20 921.60,589.00 923.40,592.20 925.20,589.00 927.00,592.20 928.80,589.00 930.60,592.20 932.40,589.00 934.20,592.20 936.00,589.00 937.80,592.20 939.60,589.00 941.40,592.20 943.20,589.00 945.00,592.20 946.80,589.00 948.60,592.20 950.40,589.00 952.20,592.20 954.00,589.00 955.80,592.20 957.60,589.00 959.40,592.20 961.20,589.00 963.00,592.20 964.80,589.00 966.60,592.20 968.40,589.00 970.20,592.20 972.00,589.00 973.80,592.20 975.60,589.00 977.40,592.20 979.20,589.00 981.00,592.20 982.80,589.00 984.60,592.20 986.40,589.00 988.20,592.20 990.00,589.00 991.80,592.20 993.60,589.00 995.40,592.20 997.20,589.00 999.00,592.20 1000.80,589.00 1002.60,592.20 1004.40,589.00 1006.20,592.20" stroke="#5b8fc3" stroke-width="1.1" fill="none"/></svg>
<div class="a" style="left:837px;top:593px;width:173px;height:1px;background:#5b8fc3;"></div>
<svg style="left:0;top:0" width="1150" height="651"><polyline points="838.50,562.00 835.50,563.80 838.50,565.60 835.50,567.40 838.50,569.20 835.50,571.00 838.50,572.80 835.50,574.60 838.50,576.40 835.50,578.20 838.50,580.00 835.50,581.80 838.50,583.60 835.50,585.40 838.50,587.20 835.50,589.00 838.50,590.80" stroke="#5b8fc3" stroke-width="1.1" fill="none"/></svg>
<svg style="left:0;top:0" width="1150" height="651"><polyline points="1010.00,562.00 1007.00,563.80 1010.00,565.60 1007.00,567.40 1010.00,569.20 1007.00,571.00 1010.00,572.80 1007.00,574.60 1010.00,576.40 1007.00,578.20 1010.00,580.00 1007.00,581.80 1010.00,583.60 1007.00,585.40 1010.00,587.20 1007.00,589.00 1010.00,590.80" stroke="#5b8fc3" stroke-width="1.1" fill="none"/></svg>
<svg style="left:0;top:0" width="1150" height="651"><polyline points="837.00,604.70 838.80,601.50 840.60,604.70 842.40,601.50 844.20,604.70 846.00,601.50 847.80,604.70 849.60,601.50 851.40,604.70 853.20,601.50 855.00,604.70 856.80,601.50 858.60,604.70 860.40,601.50 862.20,604.70 864.00,601.50 865.80,604.70 867.60,601.50 869.40,604.70 871.20,601.50 873.00,604.70 874.80,601.50 876.60,604.70 878.40,601.50 880.20,604.70 882.00,601.50 883.80,604.70 885.60,601.50 887.40,604.70 889.20,601.50 891.00,604.70 892.80,601.50 894.60,604.70 896.40,601.50 898.20,604.70 900.00,601.50 901.80,604.70 903.60,601.50 905.40,604.70 907.20,601.50 909.00,604.70 910.80,601.50 912.60,604.70 914.40,601.50 916.20,604.70 918.00,601.50 919.80,604.70 921.60,601.50 923.40,604.70 925.20,601.50 927.00,604.70 928.80,601.50 930.60,604.70 932.40,601.50 934.20,604.70 936.00,601.50 937.80,604.70 939.60,601.50 941.40,604.70 943.20,601.50 945.00,604.70 946.80,601.50 948.60,604.70 950.40,601.50 952.20,604.70 954.00,601.50 955.80,604.70 957.60,601.50 959.40,604.70 961.20,601.50 963.00,604.70 964.80,601.50 966.60,604.70 968.40,601.50 970.20,604.70 972.00,601.50 973.80,604.70 975.60,601.50 977.40,604.70 979.20,601.50 981.00,604.70 982.80,601.50 984.60,604.70 986.40,601.50 988.20,604.70 990.00,601.50 991.80,604.70 993.60,601.50 995.40,604.70 997.20,601.50 999.00,604.70 1000.80,601.50 1002.60,604.70 1004.40,601.50 1006.20,604.70" stroke="#5b8fc3" stroke-width="1.1" fill="none"/></svg>
<div class="t" style="left:838px;top:606.59px;font-size:5.8px;color:#5485b8;font-weight:400;">Shared_Email</div>
<svg style="left:0;top:0" width="1150" height="651"><polyline points="837.00,616.70 838.80,613.50 840.60,616.70 842.40,613.50 844.20,616.70 846.00,613.50 847.80,616.70 849.60,613.50 851.40,616.70 853.20,613.50 855.00,616.70 856.80,613.50 858.60,616.70 860.40,613.50 862.20,616.70 864.00,613.50 865.80,616.70 867.60,613.50 869.40,616.70 871.20,613.50 873.00,616.70 874.80,613.50 876.60,616.70 878.40,613.50 880.20,616.70 882.00,613.50 883.80,616.70 885.60,613.50 887.40,616.70 889.20,613.50 891.00,616.70 892.80,613.50 894.60,616.70 896.40,613.50 898.20,616.70 900.00,613.50 901.80,616.70 903.60,613.50 905.40,616.70 907.20,613.50 909.00,616.70 910.80,613.50 912.60,616.70 914.40,613.50 916.20,616.70 918.00,613.50 919.80,616.70 921.60,613.50 923.40,616.70 925.20,613.50 927.00,616.70 928.80,613.50 930.60,616.70 932.40,613.50 934.20,616.70 936.00,613.50 937.80,616.70 939.60,613.50 941.40,616.70 943.20,613.50 945.00,616.70 946.80,613.50 948.60,616.70 950.40,613.50 952.20,616.70 954.00,613.50 955.80,616.70 957.60,613.50 959.40,616.70 961.20,613.50 963.00,616.70 964.80,613.50 966.60,616.70 968.40,613.50 970.20,616.70 972.00,613.50 973.80,616.70 975.60,613.50 977.40,616.70 979.20,613.50 981.00,616.70 982.80,613.50 984.60,616.70 986.40,613.50 988.20,616.70 990.00,613.50 991.80,616.70 993.60,613.50 995.40,616.70 997.20,613.50 999.00,616.70 1000.80,613.50 1002.60,616.70 1004.40,613.50 1006.20,616.70" stroke="#5b8fc3" stroke-width="1.1" fill="none"/></svg>
<svg style="left:0;top:0" width="1150" height="651"><polyline points="838.50,602.00 835.50,603.80 838.50,605.60 835.50,607.40 838.50,609.20 835.50,611.00 838.50,612.80 835.50,614.60 838.50,616.40 835.50,618.20 838.50,620.00 835.50,621.80 838.50,623.60 835.50,625.40 838.50,627.20 835.50,629.00 838.50,630.80 835.50,632.60 838.50,634.40 835.50,636.20 838.50,638.00 835.50,639.80 838.50,641.60 835.50,643.40 838.50,645.20 835.50,647.00 838.50,648.80" stroke="#5b8fc3" stroke-width="1.1" fill="none"/></svg>
<svg style="left:0;top:0" width="1150" height="651"><polyline points="1010.00,602.00 1007.00,603.80 1010.00,605.60 1007.00,607.40 1010.00,609.20 1007.00,611.00 1010.00,612.80 1007.00,614.60 1010.00,616.40 1007.00,618.20 1010.00,620.00 1007.00,621.80 1010.00,623.60 1007.00,625.40 1010.00,627.20 1007.00,629.00 1010.00,630.80 1007.00,632.60 1010.00,634.40 1007.00,636.20 1010.00,638.00 1007.00,639.80 1010.00,641.60 1007.00,643.40 1010.00,645.20 1007.00,647.00 1010.00,648.80" stroke="#5b8fc3" stroke-width="1.1" fill="none"/></svg>
<svg style="left:0;top:0" width="1150" height="651"><polyline points="837.00,639.70 838.80,636.50 840.60,639.70 842.40,636.50 844.20,639.70 846.00,636.50 847.80,639.70 849.60,636.50 851.40,639.70 853.20,636.50 855.00,639.70 856.80,636.50 858.60,639.70 860.40,636.50 862.20,639.70 864.00,636.50 865.80,639.70 867.60,636.50 869.40,639.70 871.20,636.50 873.00,639.70 874.80,636.50 876.60,639.70 878.40,636.50 880.20,639.70 882.00,636.50 883.80,639.70 885.60,636.50 887.40,639.70 889.20,636.50 891.00,639.70 892.80,636.50 894.60,639.70 896.40,636.50 898.20,639.70 900.00,636.50 901.80,639.70 903.60,636.50 905.40,639.70 907.20,636.50 909.00,639.70 910.80,636.50 912.60,639.70 914.40,636.50 916.20,639.70 918.00,636.50 919.80,639.70 921.60,636.50 923.40,639.70 925.20,636.50 927.00,639.70 928.80,636.50 930.60,639.70 932.40,636.50 934.20,639.70 936.00,636.50 937.80,639.70 939.60,636.50 941.40,639.70 943.20,636.50 945.00,639.70 946.80,636.50 948.60,639.70 950.40,636.50 952.20,639.70 954.00,636.50 955.80,639.70 957.60,636.50 959.40,639.70 961.20,636.50 963.00,639.70 964.80,636.50 966.60,639.70 968.40,636.50 970.20,639.70 972.00,636.50 973.80,639.70 975.60,636.50 977.40,639.70 979.20,636.50 981.00,639.70 982.80,636.50 984.60,639.70 986.40,636.50 988.20,639.70 990.00,636.50 991.80,639.70 993.60,636.50 995.40,639.70 997.20,636.50 999.00,639.70 1000.80,636.50 1002.60,639.70 1004.40,636.50 1006.20,639.70" stroke="#5b8fc3" stroke-width="1.1" fill="none"/></svg>
<div class="t" style="left:838px;top:643.09px;font-size:5.8px;color:#5485b8;font-weight:400;">Shared_Password</div>
<svg style="left:0;top:0" width="1150" height="651"><polyline points="837.00,652.20 838.80,649.00 840.60,652.20 842.40,649.00 844.20,652.20 846.00,649.00 847.80,652.20 849.60,649.00 851.40,652.20 853.20,649.00 855.00,652.20 856.80,649.00 858.60,652.20 860.40,649.00 862.20,652.20 864.00,649.00 865.80,652.20 867.60,649.00 869.40,652.20 871.20,649.00 873.00,652.20 874.80,649.00 876.60,652.20 878.40,649.00 880.20,652.20 882.00,649.00 883.80,652.20 885.60,649.00 887.40,652.20 889.20,649.00 891.00,652.20 892.80,649.00 894.60,652.20 896.40,649.00 898.20,652.20 900.00,649.00 901.80,652.20 903.60,649.00 905.40,652.20 907.20,649.00 909.00,652.20 910.80,649.00 912.60,652.20 914.40,649.00 916.20,652.20 918.00,649.00 919.80,652.20 921.60,649.00 923.40,652.20 925.20,649.00 927.00,652.20 928.80,649.00 930.60,652.20 932.40,649.00 934.20,652.20 936.00,649.00 937.80,652.20 939.60,649.00 941.40,652.20 943.20,649.00 945.00,652.20 946.80,649.00 948.60,652.20 950.40,649.00 952.20,652.20 954.00,649.00 955.80,652.20 957.60,649.00 959.40,652.20 961.20,649.00 963.00,652.20 964.80,649.00 966.60,652.20 968.40,649.00 970.20,652.20 972.00,649.00 973.80,652.20 975.60,649.00 977.40,652.20 979.20,649.00 981.00,652.20 982.80,649.00 984.60,652.20 986.40,649.00 988.20,652.20 990.00,649.00 991.80,652.20 993.60,649.00 995.40,652.20 997.20,649.00 999.00,652.20 1000.80,649.00 1002.60,652.20 1004.40,649.00 1006.20,652.20" stroke="#5b8fc3" stroke-width="1.1" fill="none"/></svg>
</body></html>
